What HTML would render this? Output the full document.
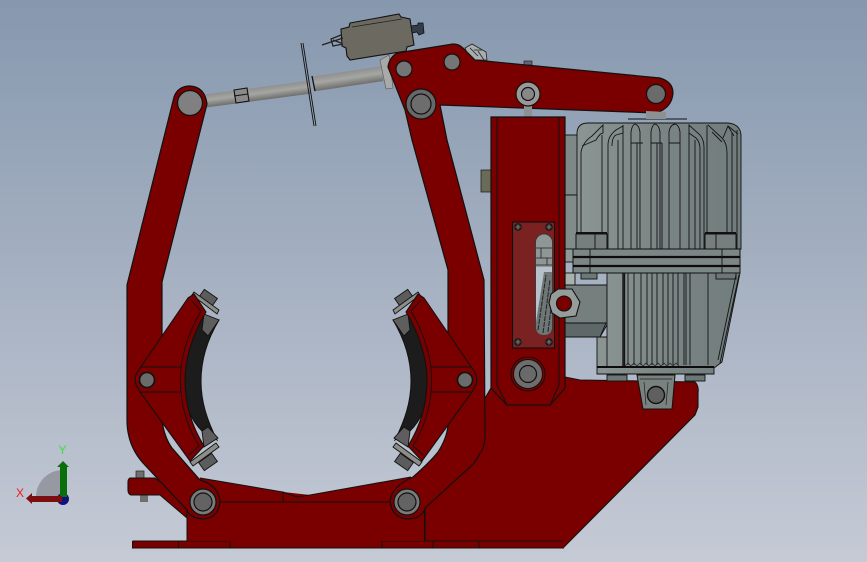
<!DOCTYPE html>
<html>
<head>
<meta charset="utf-8">
<style>
html,body{margin:0;padding:0;background:#a5afc0;}
svg{display:block;}
</style>
</head>
<body>
<svg width="867" height="562" viewBox="0 0 867 562" xmlns="http://www.w3.org/2000/svg">
<defs>
<linearGradient id="bg" x1="0" y1="0" x2="0" y2="1">
<stop offset="0" stop-color="#8698ae"/>
<stop offset="0.5" stop-color="#a6b1c2"/>
<stop offset="1" stop-color="#c5cad5"/>
</linearGradient>
<linearGradient id="rod" x1="0" y1="0" x2="0" y2="1">
<stop offset="0" stop-color="#8e9090"/>
<stop offset="0.45" stop-color="#a6a6a2"/>
<stop offset="1" stop-color="#6e6e6e"/>
</linearGradient>
<linearGradient id="mot" x1="0" y1="0" x2="1" y2="0">
<stop offset="0" stop-color="#8b9593"/>
<stop offset="0.5" stop-color="#7a8584"/>
<stop offset="1" stop-color="#717c7c"/>
</linearGradient>
<g id="shoe">
<!-- liner -->
<path d="M203,317 C190,335 184,360 184,381 C184,402 190,420 203,432 L217,440 C207,420 201,402 201,381 C201,360 207,340 219,320 Z" fill="#1c1c1c" stroke="#111"/>
<path d="M204,314 L219,320 L208,336 L202,330 Z" fill="#5e5e5e" stroke="#111" stroke-width="0.9"/>
<path d="M204,447 L218,438 L208,427 L202,431 Z" fill="#5e5e5e" stroke="#111" stroke-width="0.9"/>
<!-- bolts and plates -->
<g fill="#5c5c5c" stroke="#111" stroke-width="0.9">
<rect x="-8" y="-5" width="16" height="10" transform="translate(208,298) rotate(35)"/>
<rect x="-8" y="-5" width="16" height="10" transform="translate(208,462) rotate(-35)"/>
</g>
<path d="M192,295 L194,292 L219,310 L217,314 Z" fill="#8c8c88" stroke="#111" stroke-width="0.9"/>
<path d="M190,462 L216,443 L219,447 L193,466 Z" fill="#8c8c88" stroke="#111" stroke-width="0.9"/>
<!-- red shoe -->
<path d="M188,298 L194,294 L206,312 C192,335 185,360 185,380 C185,402 191,425 204,446 L190,461 L140,392 L138,388 Q132,380 138,371 Z" fill="#7a0000" stroke="#111" stroke-width="1.1"/>
<path d="M191,300 L201,311 C187,335 180,360 180.500,380 C180.500,402 186,425 199,446 L189,455" fill="none" stroke="#111" stroke-width="0.9"/>
<path d="M141,367 L181,367 M141,392 L181,392" fill="none" stroke="#111" stroke-width="1"/>
<circle cx="147" cy="380" r="7.5" fill="#6b6b6b" stroke="#111" stroke-width="1.6"/>
</g>
<g id="screw"><circle r="3.2" fill="#333" stroke="#111"/><path d="M-2.5,0H2.5M0,-2.5V2.5" stroke="#999" stroke-width="0.6"/></g>
</defs>

<rect width="867" height="562" fill="url(#bg)"/>

<!-- Triad -->
<path d="M63,497 L36,497 A27,27 0 0 1 63,470 Z" fill="#9699a2"/>
<circle cx="63" cy="499" r="6" fill="#12127e"/>
<path d="M60,497 V467 H57 L63,461 L69,467 H67 V497 Z" fill="#0a6f0a"/>
<path d="M62,496 H32 V493 L26,498.500 L32,504 V502 H62 Z" fill="#7c0e12"/>
<text x="58.500" y="454" font-family="Liberation Sans, sans-serif" font-size="12" fill="#3be03b">Y</text>
<text x="16" y="497" font-family="Liberation Sans, sans-serif" font-size="12" fill="#f01c1c">X</text>

<!-- Rod -->
<rect x="205" y="-6.500" width="106" height="13" fill="url(#rod)" transform="rotate(-7.500 205 101) translate(0 101)"/>
<rect x="313" y="-7.500" width="70" height="15" fill="url(#rod)" transform="rotate(-8.500 313 84) translate(0 84)"/>
<path d="M234,90 L247,88 L249,101 L236,103 Z" fill="#8a8a8a" stroke="#111" stroke-width="1.1"/>
<path d="M234,96 L248,94" stroke="#111" stroke-width="0.9"/>
<path d="M301,43 L314,126 M303,43 L316,126" stroke="#111" stroke-width="0.9"/>
<path d="M312,76 L315,91" stroke="#111" stroke-width="1.3"/>
<path d="M380,60 L389,55 L393,88 L386,89 Z" fill="#a9a9a9" stroke="#555" stroke-width="0.6"/>

<!-- limit switch -->
<path d="M350,23 L399,14 L401,17 L410,19 L414,45 L407,47 L406,51 L350,60 L347,56 L346,48 L342,46 L341,29 L349,27 Z" fill="#6c6a60" stroke="#111" stroke-width="1.1"/>
<path d="M352,27 L402,19" stroke="#222" stroke-width="0.8"/>
<path d="M343,38 L322,45 M341,35 L331,39 L333,46 L343,44 M333,40 L341,43" fill="none" stroke="#222" stroke-width="1.3"/>
<path d="M411,26 L418,25 L418,23 L423,23 L424,33 L419,35 L417,32 L412,33 Z" fill="#333d48" stroke="#111" stroke-width="0.8"/>
<!-- small linkage behind arm -->
<path d="M465,48 L472,44 L486,52 L487,60 L470,60 Z" fill="#a8aeb0" stroke="#222" stroke-width="0.8"/>
<path d="M470,48 L478,56 M474,50 L482,50 M478,51 L484,60" stroke="#222" stroke-width="0.8" fill="none"/>
<rect x="524" y="61" width="8" height="4" fill="#667" stroke="#111" stroke-width="0.6"/>

<!-- Motor -->
<g stroke="#111" stroke-width="0.9">
<rect x="565" y="135" width="16" height="60" fill="#7e8887"/>
<rect x="565" y="195" width="16" height="54" fill="#818b8a"/>
<rect x="565" y="249" width="15" height="13" fill="#8f9a98"/>
<rect x="565" y="273" width="10" height="12" fill="#a9b1ac"/>
<path d="M565,285 H607 V325 L600,337 H565 Z" fill="#747f7e"/>
<path d="M565,323 H606 L600,337 H565 Z" fill="#5f6868"/>
<path d="M607,273 H740 L722,362 L714,368 V374 H597 V337 H607 Z" fill="url(#mot)"/>
<path d="M577,132 Q578,123 588,123 H728 Q740,124 741,135 V249 H577 Z" fill="url(#mot)"/>
</g>
<path d="M625,123 H688 M628,119 H687" stroke="#111" stroke-width="1"/>
<g fill="none" stroke="#151515" stroke-width="0.9">
<!-- upper fins -->
<path d="M581,249 V152 Q583,142 592,136 L603,125 L603,133 Q600,133 596,140 L582,146"/>
<path d="M602,233 V135"/>
<path d="M608,249 V145 Q608,136 616,130 L623,126 L623,133 L616,135 Q612,137 612,146"/>
<path d="M618,249 V140 M623,249 V125"/>
<path d="M631,249 V132 Q632,125 635,124 Q639,125 640,132 V249 M631,143 H643 M637,143 V249"/>
<path d="M651,249 V132 Q652,125 655,124 Q659,125 660,132 V249 M651,143 H662 M657,143 V249 M662,143 V249"/>
<path d="M669,249 V132 Q670,125 675,124 Q679,125 680,132 V249 M669,143 H680"/>
<path d="M689,249 V125 L700,135 Q704,140 704,147 V249 M689,133 L696,138 Q700,142 700,149 V249"/>
<path d="M695,140 V249"/>
<path d="M707,233 V125 M708,125 L722,138 Q727,143 727,153 V249 M712,132 L722,142"/>
<path d="M732,249 V133 M737,249 V130 M723,138 L728,126 L734,136 M728,126 L738,134"/>
</g>
<g fill="#767f7e" stroke="#111" stroke-width="1">
<rect x="576" y="234" width="31" height="15"/>
<rect x="705" y="234" width="31" height="15"/>
</g>
<path d="M576,233 H607 M705,233 H736" stroke="#111" stroke-width="2"/>
<path d="M595,234 V249 M716,234 V249" stroke="#111" stroke-width="0.9"/>
<rect x="573" y="249" width="167" height="24" fill="#7c8685" stroke="#111"/>
<path d="M573,257 H740 M573,266 H740" stroke="#0c0c0c" stroke-width="2.200"/>
<path d="M590,249 V273 M722,249 V273" stroke="#111" stroke-width="0.9"/>
<g stroke="#111" stroke-width="0.9" fill="#6d7777">
<rect x="581" y="273" width="16" height="6"/>
<rect x="716" y="273" width="20" height="6"/>
</g>
<!-- lower fins -->
<g fill="none" stroke="#151515" stroke-width="0.9">
<path d="M623,273 V367 M624.500,273 V367" stroke-width="1.400"/>
<path d="M628,273 V365 M634,273 V365 M641,273 V365 M647,273 V365 M652,273 V365 M657,273 V365 M663,273 V365 M668,273 V365 M673,273 V365 M678,273 V365 M684,273 V365 M686,273 V365 M690,273 V365 M708,273 V365"/>
<path d="M739,275 L720,363 M736,275 L718,360"/>
<path d="M607,337 V367"/>
</g>
<path d="M597,367 H714" stroke="#0c0c0c" stroke-width="2"/>
<path d="M625,366 l3,-3 l3,3 l3,-3 l3,3 l3,-3 l3,3 l3,-3 l3,3 l3,-3 l3,3 l3,-3 l3,3 l3,-3 l3,3 l3,-3 l3,3 l3,-3 l3,3" fill="none" stroke="#222" stroke-width="0.7"/>

<!-- Base plate -->
<path d="M484,400 L491,388 L565,377 L580,380 L695,382 Q699,386 698,393 L698,407 L695,415 L563,548 L425,548 L425,508 Z" fill="#7a0000" stroke="#111" stroke-width="1.100"/>
<g fill="#6d7777" stroke="#111" stroke-width="0.9">
<rect x="607" y="375" width="20" height="6"/>
<rect x="685" y="375" width="20" height="6"/>
</g>
<path d="M637,375 H675 L672,409 H643 Z" fill="#79827f" stroke="#111" stroke-width="1"/>
<path d="M640,379 H672 M644,382 L646,405 M668,382 L666,405" stroke="#222" stroke-width="0.7" fill="none"/>
<circle cx="656" cy="395" r="8.500" fill="#5f5f5f" stroke="#111" stroke-width="1.400"/>

<!-- Left lug -->
<rect x="136" y="471" width="8" height="8" fill="#6f6f6f" stroke="#222" stroke-width="0.7"/>
<rect x="140" y="494" width="8" height="8" fill="#6f6f6f"/>
<path d="M130,478 H155 L200,510 L187,518 L160,495 H131 Q128,494 128,490 V482 Q128,479 130,478 Z" fill="#7a0000" stroke="#111" stroke-width="1.100"/>

<!-- Foot -->
<rect x="132" y="541" width="432" height="7" fill="#7a0000"/>
<path d="M132.500,541 H230 M382,541 H564 M564,548 H132.500 V541 M178.500,541 V548 M230,541 V548 M382,541 V548 M433,541 V548 M479,541 V548" fill="none" stroke="#111" stroke-width="1"/>

<!-- Base center -->
<path d="M200,478 L283,492 L310,495 L411,477 L425,505 V541 H187 V505 Z" fill="#7a0000"/>
<path d="M200,478 L283,492 V502 M283,492 L297,497 L310,495 L411,477 M220,502 H392 M187,505 V541 M424.500,505 V541" fill="none" stroke="#111" stroke-width="1"/>

<!-- Left arm -->
<path d="M174,97 Q178,86 190,86 Q205,87 207,104 L162,282 V420 Q164,437 172,448 L200,480 Q218,485 220,501 Q219,518 203,519 Q190,518 187,510 L143,463 Q127,445 127,420 V285 Z" fill="#7a0000" stroke="#111" stroke-width="1.200"/>
<circle cx="190" cy="103" r="12.500" fill="#808080" stroke="#111" stroke-width="1.300"/>

<!-- Right arm + top arm -->
<path d="M388,67 Q389,58 397,53 L453,44 Q459,44 463,48 L475,60 L660,78 Q673,82 673,93 Q672,108 656,113 L440,105 L447,140 L484,280 L485,437 Q484,450 480,453 Q476,462 470,467 L425,508 Q423,518 408,519 Q392,518 390,501 Q392,486 413,477 Q430,462 438,452 Q447,438 448,425 V270 L412,140 L405,110 Z" fill="#7a0000" stroke="#111" stroke-width="1.200"/>
<circle cx="404" cy="69" r="8" fill="#757575" stroke="#111" stroke-width="1.200"/>
<circle cx="452" cy="62" r="8" fill="#757575" stroke="#111" stroke-width="1.200"/>
<circle cx="656" cy="94" r="9.500" fill="#6b6b6b" stroke="#111" stroke-width="1.200"/>
<circle cx="421" cy="104" r="15" fill="#686868" stroke="#111" stroke-width="1.200"/>
<circle cx="421" cy="104" r="10" fill="#6d6d6d" stroke="#111" stroke-width="1.200"/>
<path d="M524,106 h8 v12 h-8 Z" fill="#8d9193"/>
<circle cx="528" cy="94" r="12" fill="#999" stroke="#111" stroke-width="1.200"/>
<circle cx="528" cy="94" r="6.500" fill="#888" stroke="#111" stroke-width="1.200"/>
<path d="M646,111 L666,112 V119 H646 Z" fill="#8d9193"/>

<!-- pins on base -->
<g stroke="#111">
<circle cx="203" cy="502" r="13" fill="#7a7a7a" stroke-width="1.200"/>
<circle cx="203" cy="502" r="9" fill="#636363" stroke-width="1.200"/>
<circle cx="407" cy="502" r="13" fill="#7a7a7a" stroke-width="1.200"/>
<circle cx="407" cy="502" r="9" fill="#636363" stroke-width="1.200"/>
</g>

<!-- Shoes -->
<use href="#shoe"/>
<g transform="matrix(-1 0 0 1 612 0)"><use href="#shoe"/></g>

<!-- Column -->
<rect x="481" y="170" width="10" height="22" fill="#696a58" stroke="#222" stroke-width="0.8"/>
<path d="M491,117 H565 V388 L550,405 H507 L491,388 Z" fill="#7a0000" stroke="#111" stroke-width="1.200"/>
<path d="M497,117 V385 L507,405 M559,117 V385 L550,405" fill="none" stroke="#111" stroke-width="1"/>
<!-- sight plate -->
<rect x="512.500" y="222" width="42" height="126" fill="#7a2222" stroke="#111" stroke-width="1.200"/>
<use href="#screw" x="518" y="227"/>
<use href="#screw" x="549" y="227"/>
<use href="#screw" x="518" y="342"/>
<use href="#screw" x="549" y="342"/>
<rect x="535.500" y="234" width="17" height="101" rx="8.500" fill="#8e9796" stroke="#333" stroke-width="0.8"/>
<path d="M536,267 H552 V325 H536 Z" fill="#b7c1cc"/>
<path d="M536,322 L544,272 L552,272 V327 Q552,335 544,335 Q536,335 536,327 Z" fill="#6e7776"/>
<path d="M538,330 L546,275 M543,333 L550,280 M548,332 L552,300" stroke="#222" stroke-width="1" fill="none" stroke-dasharray="5 1"/>
<path d="M536,248 H552 M536,258 H552 M536,265 H552 M541,248 V258 M547,258 V265" stroke="#222" stroke-width="0.8" fill="none"/>
<!-- hex nut -->
<path d="M551,294 L558,289 L572,289 L580,302 L576,316 L560,318 L552,313 L549,303 Z" fill="#959c9a" stroke="#111" stroke-width="1.100"/>
<circle cx="564" cy="303.500" r="7.500" fill="#7a0000" stroke="#111" stroke-width="1.100"/>
<!-- lower bolt -->
<circle cx="528" cy="374" r="17" fill="#7a0000" stroke="#111" stroke-width="1"/>
<circle cx="528" cy="374" r="14.500" fill="#6e6e6e" stroke="#111" stroke-width="1"/>
<circle cx="528" cy="374" r="8.500" fill="#6a6a6a" stroke="#111" stroke-width="1.200"/>
</svg>
</body>
</html>
